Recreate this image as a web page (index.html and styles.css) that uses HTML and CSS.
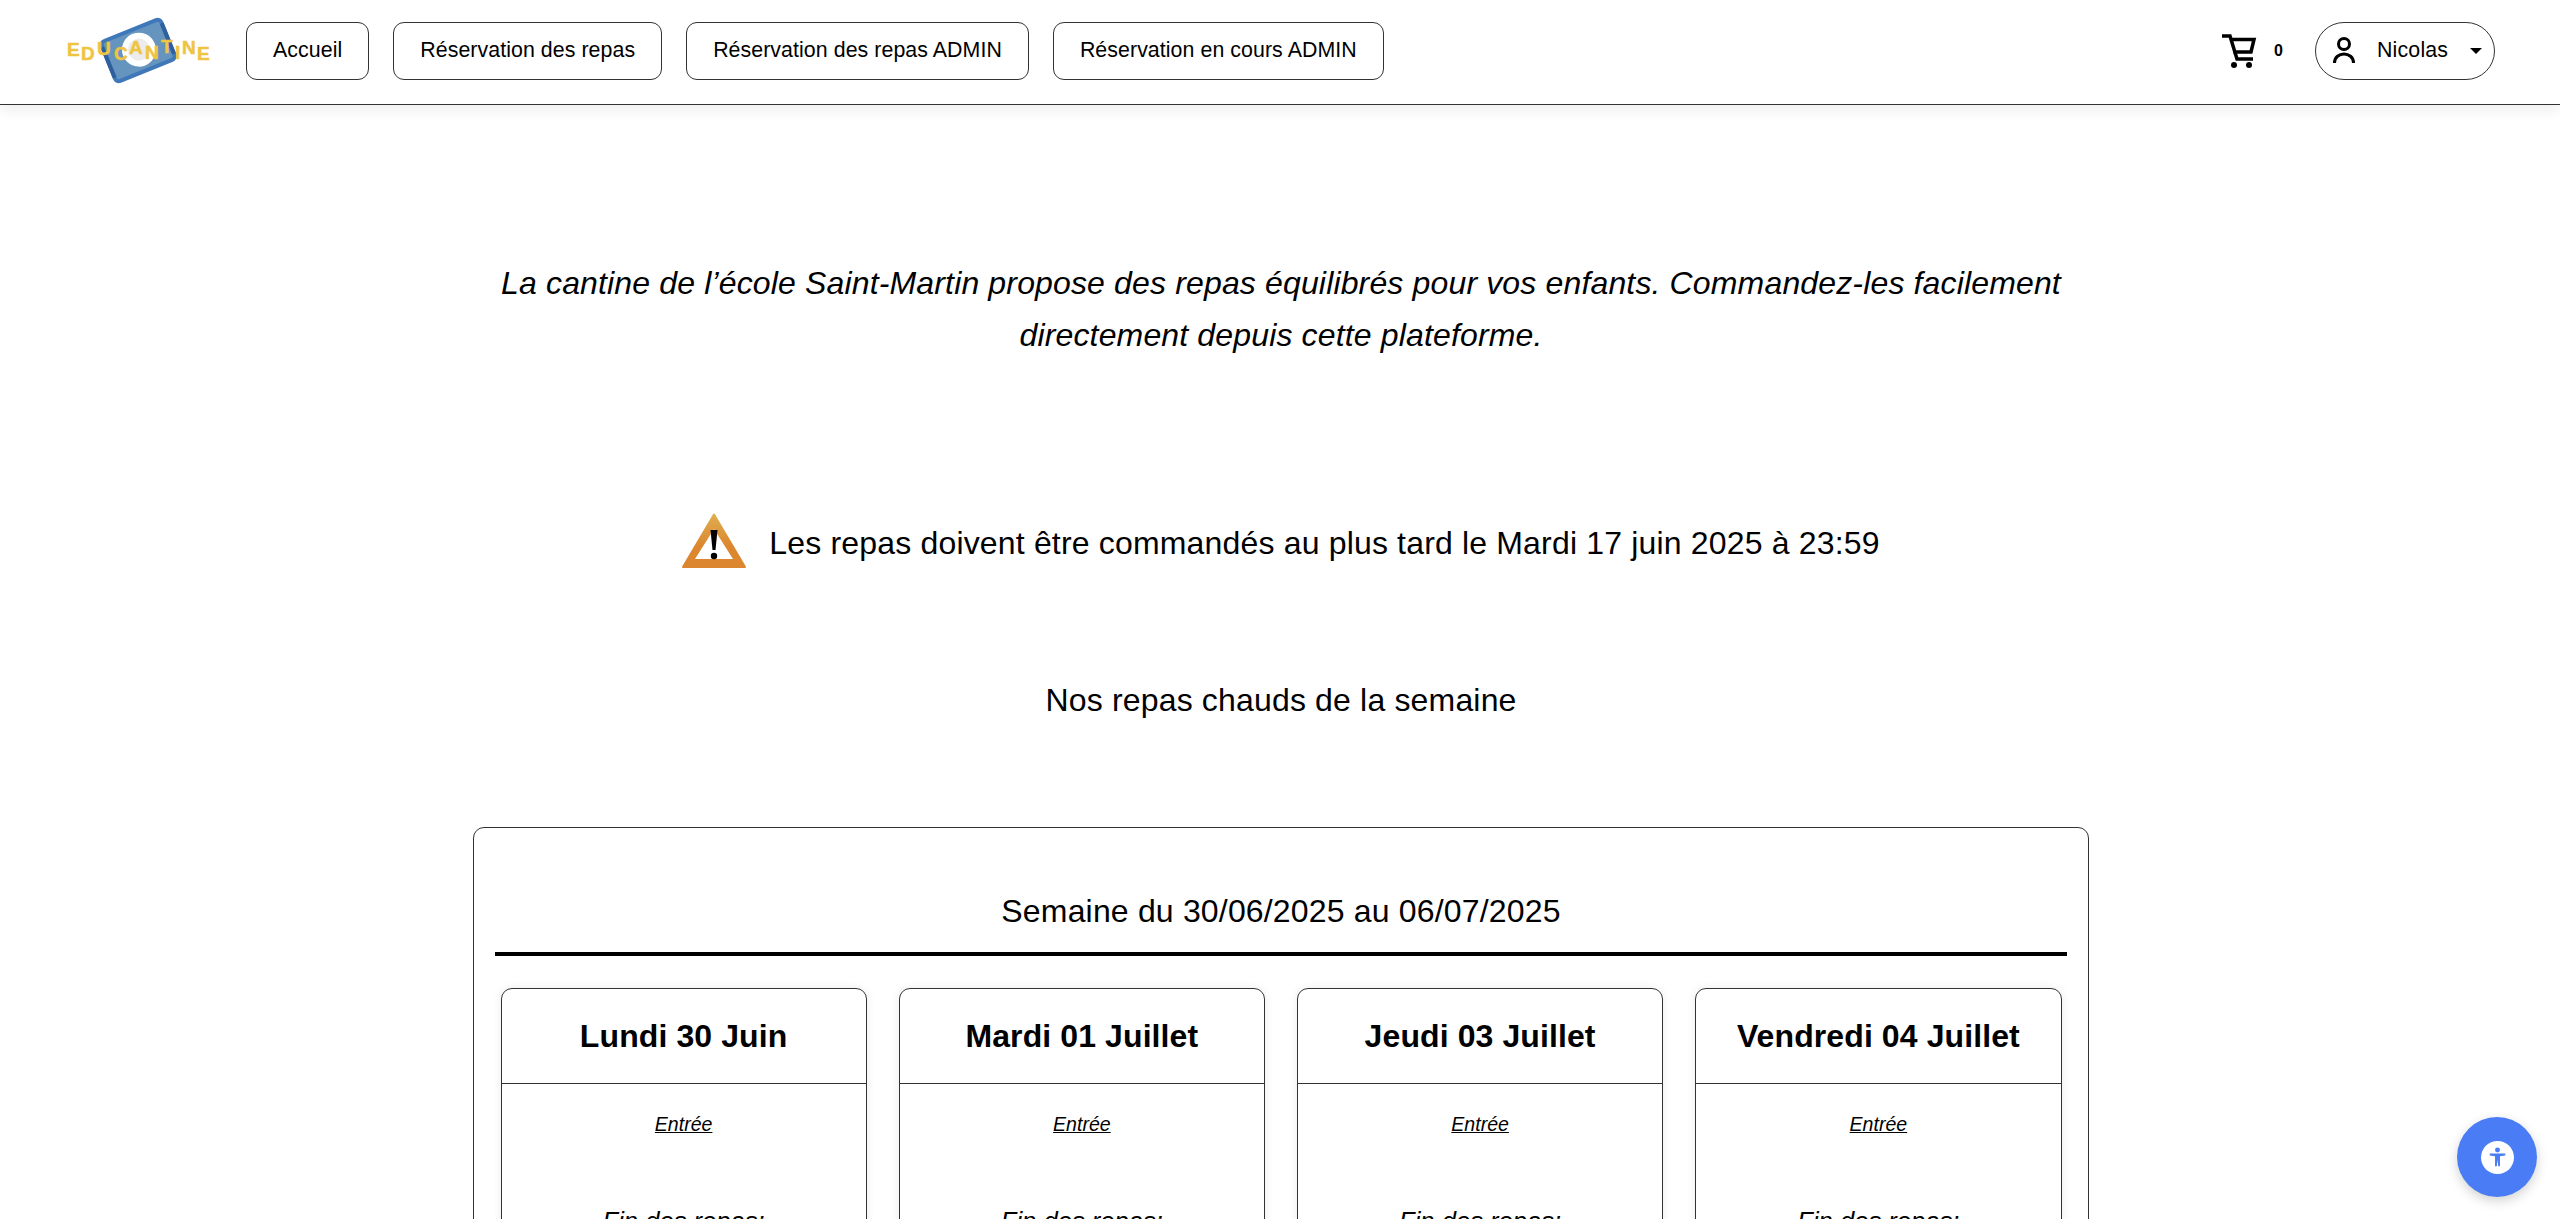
FILE: index.html
```html
<!DOCTYPE html>
<html lang="fr">

<head>
  <meta charset="utf-8">
  <title>Educantine</title>
  <link rel="stylesheet" href="styles.css">
</head>

<body>
  <header class="topbar">
    <svg class="logo" width="150" height="68" viewBox="0 0 150 68" aria-label="Educantine">
      <g transform="translate(1 1) rotate(-22 71 32)">
        <rect x="39" y="11" width="64" height="43" rx="4" fill="#6594bf" stroke="#3f78b8" stroke-width="4" />
        <rect x="37" y="16" width="4" height="33" fill="#2f5f9c" />
        <rect x="101" y="16" width="4" height="33" fill="#2f5f9c" />
        <circle cx="72" cy="32" r="17" fill="#fff" />
        <circle cx="72" cy="32" r="11" fill="#ececec" />
      </g>
      <g class="logo-letters">
        <text x="1" y="39">E</text>
        <text x="15" y="43">D</text>
        <text x="31" y="38">U</text>
        <text x="48" y="43">C</text>
        <text x="63" y="37">A</text>
        <text x="79" y="42">N</text>
        <text x="95" y="36">T</text>
        <text x="109" y="42">I</text>
        <text x="116" y="37">N</text>
        <text x="131" y="43">E</text>
      </g>
    </svg>
    <nav class="nav">
      <a class="nav-btn">Accueil</a>
      <a class="nav-btn">Réservation des repas</a>
      <a class="nav-btn">Réservation des repas ADMIN</a>
      <a class="nav-btn">Réservation en cours ADMIN</a>
    </nav>
    <div class="topbar-right">
      <div class="cart">
        <svg width="36" height="36" viewBox="0 0 36 36" fill="none" stroke="#000" stroke-width="3.500">
          <path d="M1 3h8l7 23h16" />
          <path d="M9 6.500h24l-3 12.500H12.500" />
          <circle cx="13" cy="32" r="3" fill="#000" stroke="none" />
          <circle cx="28" cy="32" r="3" fill="#000" stroke="none" />
        </svg>
        <span class="cart-count">0</span>
      </div>
      <div class="user">
        <svg width="22" height="28" viewBox="0 0 22 28" fill="none" stroke="#000" stroke-width="3">
          <circle cx="11" cy="7" r="5.500" />
          <path d="M1.500 26c0-12 19-12 19 0" />
        </svg>
        <span class="user-name">Nicolas</span>
        <span class="caret"></span>
      </div>
    </div>
  </header>

  <main class="content">
    <p class="intro">La cantine de l’école Saint-Martin propose des repas équilibrés pour vos enfants. Commandez-les facilement directement depuis cette plateforme.</p>

    <div class="warning">
      <svg class="warning-icon" width="64" height="55" viewBox="0 0 64 55">
        <defs>
          <linearGradient id="warn" x1="0" y1="0" x2="0" y2="1">
            <stop offset="0" stop-color="#dfae50" />
            <stop offset="0.600" stop-color="#dc872f" />
          </linearGradient>
        </defs>
        <path d="M32 1.500 63 54H1Z" fill="url(#warn)" stroke="url(#warn)" stroke-width="2" stroke-linejoin="round" />
        <path d="M32 16 51 46H13Z" fill="#fff" />
        <path d="M28.500 17h7l-2 20h-3Z" fill="#000" />
        <circle cx="32" cy="43" r="3.200" fill="#000" />
      </svg>
      <span>Les repas doivent être commandés au plus tard le Mardi 17 juin 2025 à 23:59</span>
    </div>

    <h2 class="week-title">Nos repas chauds de la semaine</h2>

    <section class="week">
      <h3 class="week-range">Semaine du 30/06/2025 au 06/07/2025</h3>
      <div class="days">
        <article class="day">
          <div class="day-name">Lundi 30 Juin</div>
          <div class="day-body">
            <div class="dish">Entrée</div>
            <div class="dish-end">Fin des repas:</div>
          </div>
        </article>
        <article class="day">
          <div class="day-name">Mardi 01 Juillet</div>
          <div class="day-body">
            <div class="dish">Entrée</div>
            <div class="dish-end">Fin des repas:</div>
          </div>
        </article>
        <article class="day">
          <div class="day-name">Jeudi 03 Juillet</div>
          <div class="day-body">
            <div class="dish">Entrée</div>
            <div class="dish-end">Fin des repas:</div>
          </div>
        </article>
        <article class="day">
          <div class="day-name">Vendredi 04 Juillet</div>
          <div class="day-body">
            <div class="dish">Entrée</div>
            <div class="dish-end">Fin des repas:</div>
          </div>
        </article>
      </div>
    </section>
  </main>

  <button class="a11y" aria-label="Accessibilité">
    <span class="a11y-disc">
      <svg width="24" height="28" viewBox="0 0 24 28" fill="#4a7df5">
        <circle cx="12" cy="4" r="3.500" />
        <path d="M1 9 23 9 23 12 15.500 13 15.500 27 13 27 12 18 11 27 8.500 27 8.500 13 1 12Z" />
      </svg>
    </span>
  </button>
</body>

</html>
```

FILE: styles.css
```css
html,
body {
  height: 100%;
  overflow: hidden;
}

body {
  margin: 0;
  background-color: #fff;
  color: #000;
  font-family: "Liberation Sans", Arial, sans-serif;
}

.topbar {
  display: flex;
  align-items: center;
  box-sizing: border-box;
  height: 105px;
  padding: 0 65px 3px 66px;
  border-bottom: 1px solid #333;
  box-shadow: 0 4px 14px rgba(0, 0, 0, 0.08);
}

.logo {
  flex: none;
  margin-right: 30px;
}

.logo-letters {
  font-size: 19px;
  font-weight: bold;
  fill: #efc443;
  stroke: #efc443;
  stroke-width: 0.5px;
}

.nav {
  display: flex;
  gap: 24px;
}

.nav-btn {
  display: flex;
  align-items: center;
  height: 58px;
  box-sizing: border-box;
  padding: 0 26px;
  border: 1px solid #333;
  border-radius: 11px;
  font-size: 21.33px;
  letter-spacing: 0.07px;
}

.topbar-right {
  display: flex;
  align-items: center;
  margin-left: auto;
}

.cart {
  display: flex;
  align-items: center;
  gap: 17px;
  margin-right: 32px;
}

.cart-count {
  font-size: 16px;
  font-weight: bold;
}

.user {
  display: flex;
  align-items: center;
  box-sizing: border-box;
  width: 180px;
  height: 58px;
  padding: 0 12px 0 17px;
  border: 1px solid #333;
  border-radius: 29px;
}

.user-name {
  margin-left: 22px;
  font-size: 21.33px;
  letter-spacing: 0.18px;
}

.caret {
  margin-left: auto;
  border-top: 6px solid #000;
  border-left: 6px solid transparent;
  border-right: 6px solid transparent;
}

.content {
  display: flex;
  flex-direction: column;
  align-items: center;
  padding-left: 2px;
}

.intro {
  width: 1600px;
  margin: 152px 0 0;
  font-size: 32px;
  font-style: italic;
  line-height: 52px;
  letter-spacing: 0.15px;
  text-align: center;
}

.warning {
  display: flex;
  align-items: center;
  gap: 23px;
  margin-top: 152px;
  font-size: 32px;
  letter-spacing: 0.17px;
}

.warning-icon {
  margin-bottom: 6px;
}

.week-title {
  margin: 106px 0 0;
  font-size: 32px;
  font-weight: normal;
  line-height: 40px;
  letter-spacing: 0.17px;
}

.week {
  box-sizing: border-box;
  width: 1616px;
  margin-top: 107px;
  padding: 0 21px;
  border: 1px solid #333;
  border-radius: 11px;
}

.week-range {
  margin: 0;
  padding: 63px 0 21px;
  border-bottom: 4px solid #000;
  font-size: 32px;
  font-weight: normal;
  line-height: 40px;
  letter-spacing: 0.17px;
  text-align: center;
}

.days {
  display: grid;
  grid-template-columns: repeat(4, 1fr);
  gap: 32px;
  margin-top: 32px;
  padding: 0 5.5px;
}

.day {
  border: 1px solid #333;
  border-radius: 11px;
  box-shadow: 0 0 10px rgba(0, 0, 0, 0.08);
}

.day-name {
  padding: 27px 0 26px;
  border-bottom: 1px solid #333;
  font-size: 32px;
  font-weight: bold;
  line-height: 41px;
  letter-spacing: 0.1px;
  text-align: center;
}

.day-body {
  padding-top: 27px;
  text-align: center;
  font-style: italic;
}

.dish {
  font-size: 19.55px;
  line-height: 26px;
  text-decoration: underline;
}

.dish-end {
  margin-top: 70px;
  font-size: 25.6px;
}

.a11y {
  position: fixed;
  right: 23px;
  bottom: 22px;
  display: flex;
  align-items: center;
  justify-content: center;
  width: 80px;
  height: 80px;
  padding: 0;
  border: 0;
  border-radius: 50%;
  background-color: #4a7df5;
  box-shadow: 0 4px 12px rgba(0, 0, 0, 0.18);
}

.a11y-disc {
  display: flex;
  align-items: center;
  justify-content: center;
  width: 33px;
  height: 33px;
  border-radius: 50%;
  background-color: #fff;
}

.a11y-disc svg {
  width: 17px;
  height: 20px;
}
```
